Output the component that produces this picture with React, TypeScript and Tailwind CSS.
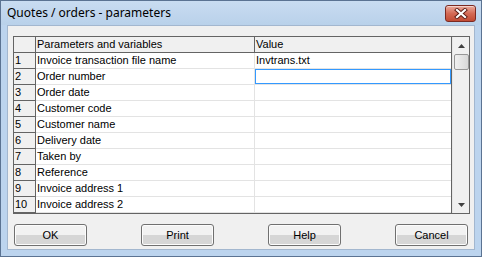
import * as React from "react";

const params = [
  { name: "Invoice transaction file name", value: "Invtrans.txt" },
  { name: "Order number", value: "" },
  { name: "Order date", value: "" },
  { name: "Customer code", value: "" },
  { name: "Customer name", value: "" },
  { name: "Delivery date", value: "" },
  { name: "Taken by", value: "" },
  { name: "Reference", value: "" },
  { name: "Invoice address 1", value: "" },
  { name: "Invoice address 2", value: "" },
];

function CloseButton() {
  return (
    <div className="flex h-[17px] w-[31px] items-center justify-center rounded-[3px] border border-[#7b2a22] bg-gradient-to-b from-[#e9a99b] via-[#d46a55] to-[#c14a33] shadow-[inset_0_1px_0_rgba(255,255,255,0.5)]">
      <svg width="14" height="11" viewBox="0 0 14 11">
        <path
          d="M3 2 L11 9 M11 2 L3 9"
          stroke="#5a1a12"
          strokeWidth="4"
          strokeLinecap="square"
        />
        <path
          d="M3 2 L11 9 M11 2 L3 9"
          stroke="#ffffff"
          strokeWidth="2.2"
          strokeLinecap="square"
        />
      </svg>
    </div>
  );
}

function DialogButton({ label }: { label: string }) {
  return (
    <button className="flex h-[22px] w-[73px] items-center justify-center rounded-[3px] border border-[#707070] bg-gradient-to-b from-[#f2f2f2] from-50% to-[#d6d6d6] to-50% text-[11px] text-black shadow-[inset_0_0_0_1px_#fcfcfc]">
      {label}
    </button>
  );
}

function ScrollBar() {
  return (
    <div className="flex w-[17px] flex-col items-center border-l border-[#e6e6e6] bg-[#f0f0f0]">
      <div className="flex h-[17px] w-full items-center justify-center">
        <svg width="7" height="4" viewBox="0 0 7 4">
          <path d="M0 4 L3.5 0 L7 4 Z" fill="#404040" />
        </svg>
      </div>
      <div className="h-[16px] w-[15px] rounded-[2px] border border-[#979797] bg-gradient-to-r from-[#f0f0f0] to-[#d8d8d8]" />
      <div className="flex-1" />
      <div className="flex h-[17px] w-full items-center justify-center">
        <svg width="7" height="4" viewBox="0 0 7 4">
          <path d="M0 0 L7 0 L3.5 4 Z" fill="#404040" />
        </svg>
      </div>
    </div>
  );
}

function ParamGrid() {
  return (
    <div className="flex w-[457px] border border-[#646464] bg-white">
      <div className="flex w-[438px] flex-col">
        {/* header */}
        <div className="flex h-[16px] bg-[#f0f0f0]">
          <div className="w-[22px] border-r border-b border-[#646464]" />
          <div className="w-[219px] border-r border-b border-[#646464] pl-[1px] leading-[15px]">
            Parameters and variables
          </div>
          <div className="flex-1 border-b border-[#646464] pl-[1px] leading-[15px]">
            Value
          </div>
        </div>
        {params.map((p, i) => (
          <div key={i} className="flex h-[16px]">
            <div className="w-[22px] border-r border-b border-[#646464] bg-[#f0f0f0] pl-[1px] leading-[15px]">
              {i + 1}
            </div>
            <div className="w-[219px] border-r border-b border-[#e3e3e3] pl-[1px] leading-[15px]">
              {p.name}
            </div>
            <div className="flex-1 border-b border-[#e3e3e3] leading-[15px]">
              {i === 1 ? (
                <div className="h-[15px] border border-[#3399ff]" />
              ) : (
                <span className="pl-[1px]">{p.value}</span>
              )}
            </div>
          </div>
        ))}
      </div>
      <div className="w-[1px] bg-[#646464]" />
      <ScrollBar />
    </div>
  );
}

export default function App() {
  return (
    <div
      className="flex h-[257px] w-[482px] flex-col border border-[#5b7392] bg-[#bcd4ee] text-[11px] text-black"
      style={{ fontFamily: '"Liberation Sans", Arial, sans-serif' }}
    >
      {/* Title bar */}
      <div className="flex h-[24px] items-center justify-between bg-gradient-to-b from-[#c9dcf1] to-[#b9d1ea] pl-[6px] pr-[5px]">
        <span
          className="text-[12px] text-black"
          style={{ fontFamily: '"Noto Sans", "Open Sans", sans-serif' }}
        >
          Quotes / orders - parameters
        </span>
        <CloseButton />
      </div>

      {/* Client area */}
      <div className="mx-[6px] mb-[6px] flex flex-1 flex-col border border-[#a3b7cf] bg-[#f0f0f0] pl-[5px] pt-[10px]">
        <ParamGrid />
        <div className="mt-[10px] flex w-[455px] justify-between pl-[1px]">
          <DialogButton label="OK" />
          <DialogButton label="Print" />
          <DialogButton label="Help" />
          <DialogButton label="Cancel" />
        </div>
      </div>
    </div>
  );
}
